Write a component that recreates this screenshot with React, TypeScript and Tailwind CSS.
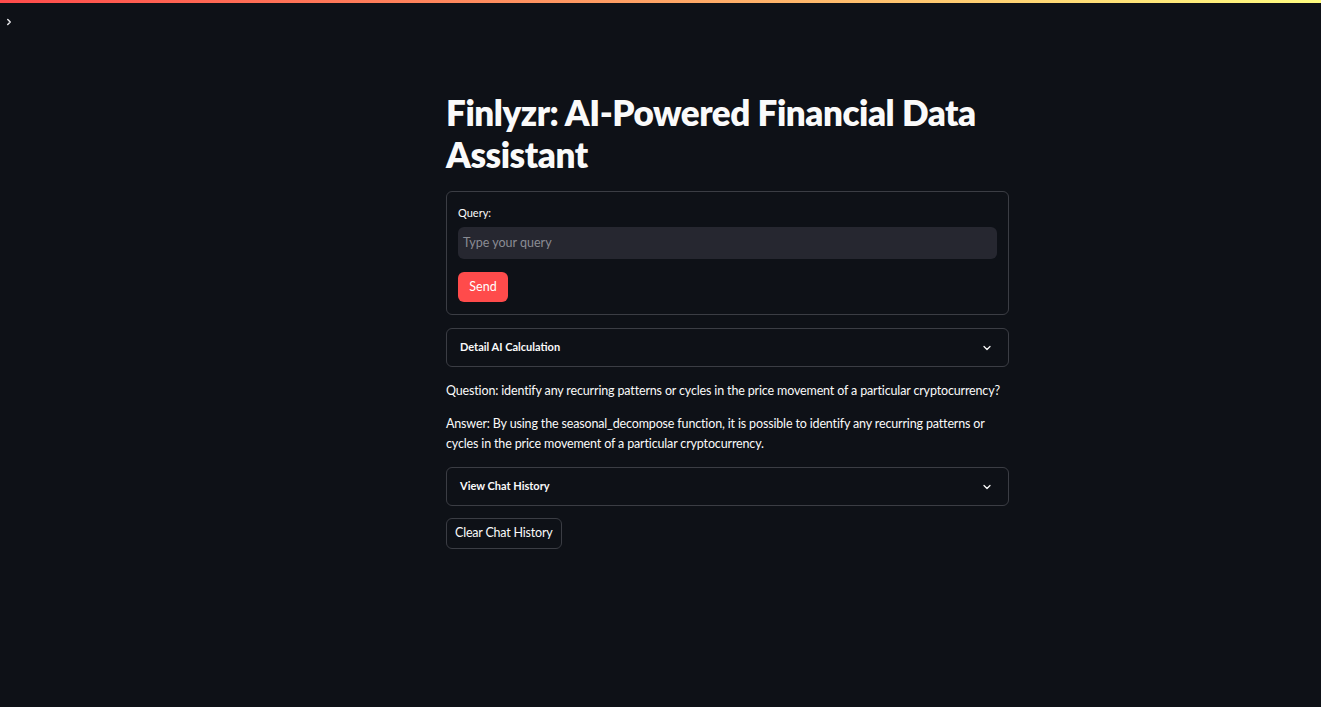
import React from "react";

function Chevron() {
  return (
    <svg width="12" height="12" viewBox="0 0 24 24" fill="none" stroke="#fafafa" strokeWidth="2.5" strokeLinecap="round" strokeLinejoin="round">
      <path d="M6 9l6 6 6-6" />
    </svg>
  );
}

function Expander({ label }: { label: string }) {
  return (
    <div className="flex h-[39px] items-center justify-between rounded-[6px] border border-[#3b3d44] px-[13px]">
      <span className="text-[11px] font-bold text-[#fafafa]">{label}</span>
      <span className="mr-[2px]">
        <Chevron />
      </span>
    </div>
  );
}

export default function App() {
  return (
    <div
      className="relative min-h-[707px] w-full bg-[#0e1117] text-[#fafafa]"
      style={{ fontFamily: "Lato, 'Noto Sans', sans-serif" }}
    >
      <div className="h-[3px] w-full bg-[linear-gradient(90deg,#ff4b4b,#fffd80)]" />
      <div className="absolute left-[4px] top-[17px]">
        <svg width="10" height="10" viewBox="0 0 24 24" fill="none" stroke="#e6e6ea" strokeWidth="3.5" strokeLinecap="round" strokeLinejoin="round">
          <path d="M9 6l6 6-6 6" />
        </svg>
      </div>
      <div className="ml-[446px] flex w-[563px] flex-col pt-[88px]">
        <h1 className="text-[35px] font-extrabold leading-[42px] tracking-[-0.45px] text-[#fafafa]">
          Finlyzr: AI-Powered Financial Data Assistant
        </h1>
        <div className="mt-[16px] rounded-[6px] border border-[#3b3d44] px-[11px] pb-[12px] pt-[13px]">
          <div className="mb-[6px] text-[11px] leading-[16px] text-[#fafafa]">Query:</div>
          <div className="flex h-[32px] items-center rounded-[6px] bg-[#262730] px-[5px] text-[12.5px] text-[#8a8c94]">
            Type your query
          </div>
          <button className="mt-[13px] flex h-[30px] w-[50px] items-center justify-center rounded-[6px] bg-[#ff4b4b] text-[12.5px] text-white">
            Send
          </button>
        </div>
        <div className="mt-[13px]">
          <Expander label="Detail AI Calculation" />
        </div>
        <p className="mt-[14px] text-[12.5px] leading-[20px] tracking-[-0.15px]">
          Question: identify any recurring patterns or cycles in the price movement of a particular cryptocurrency?
        </p>
        <p className="mt-[13px] text-[12.5px] leading-[20px] tracking-[-0.15px]">
          Answer: By using the seasonal_decompose function, it is possible to identify any recurring patterns or cycles in the price movement of a particular cryptocurrency.
        </p>
        <div className="mt-[13px]">
          <Expander label="View Chat History" />
        </div>
        <div className="mt-[12px]">
          <button className="flex h-[31px] items-center rounded-[6px] border border-[#3b3d44] bg-[#0e1117] px-[8px] text-[12.5px] tracking-[-0.2px] text-[#fafafa]">
            Clear Chat History
          </button>
        </div>
      </div>
    </div>
  );
}
